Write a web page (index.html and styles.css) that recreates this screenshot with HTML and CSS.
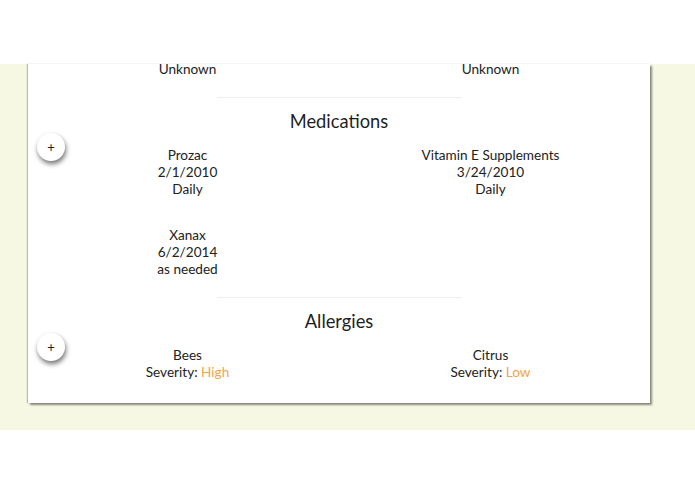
FILE: index.html
```html
<!DOCTYPE html>
<html>
<head>
<meta charset="utf-8">
<link rel="stylesheet" href="styles.css">
</head>
<body>
<div class="stage">
  <div class="card">
    <div class="grid top-row">
      <div class="item">Unknown</div>
      <div class="item">Unknown</div>
    </div>
    <div class="sep"></div>
    <div class="section">
      <h2 class="title">Medications</h2>
      <button class="add">+</button>
      <div class="grid">
        <div class="item">Prozac<br>2/1/2010<br>Daily</div>
        <div class="item">Vitamin E Supplements<br>3/24/2010<br>Daily</div>
        <div class="item">Xanax<br>6/2/2014<br>as needed</div>
      </div>
    </div>
    <div class="sep"></div>
    <div class="section">
      <h2 class="title">Allergies</h2>
      <button class="add">+</button>
      <div class="grid">
        <div class="item">Bees<br>Severity: <span class="sev">High</span></div>
        <div class="item">Citrus<br>Severity: <span class="sev">Low</span></div>
      </div>
    </div>
  </div>
</div>
</body>
</html>
```
FILE: styles.css
```css
html, body {
  margin: 0;
  padding: 0;
  background: #ffffff;
}
body {
  font-family: Lato, "Open Sans", sans-serif;
  font-size: 13.6px;
  color: #222222;
}
.stage {
  display: flow-root;
  margin-top: 64px;
  height: 366px;
  background: #f7f8e3;
  padding-left: 28px;
  box-sizing: border-box;
}
.card {
  display: flow-root;
  width: 622px;
  padding: 0 8px 7px;
  box-sizing: border-box;
  background: #ffffff;
  box-shadow: 2px 2px 2px rgba(0, 0, 0, 0.45), -1px 0 1px rgba(0, 0, 0, 0.25);
}
.grid {
  display: grid;
  grid-template-columns: 1fr 1fr;
}
.item {
  text-align: center;
  line-height: 17px;
  padding: 14px 0 15px;
}
.top-row {
  margin-top: -3px;
}
.top-row .item {
  padding-top: 0;
}
.sep {
  width: 245px;
  height: 1px;
  background: #eeeeee;
  margin: 4px auto 11px;
}
.section {
  position: relative;
}
.title {
  margin: 0;
  font-size: 18.3px;
  font-weight: normal;
  line-height: 24px;
  text-align: center;
  color: #1e1e1e;
}
.add {
  position: absolute;
  left: 1px;
  top: 24px;
  width: 28px;
  height: 28px;
  border: none;
  border-radius: 50%;
  background: #ffffff;
  box-shadow: 1px 3px 5px rgba(0, 0, 0, 0.55);
  font-family: Lato, sans-serif;
  font-size: 13px;
  line-height: 28px;
  padding: 0;
  color: #222222;
  text-align: center;
}
.sev {
  color: #f4a447;
}
```
